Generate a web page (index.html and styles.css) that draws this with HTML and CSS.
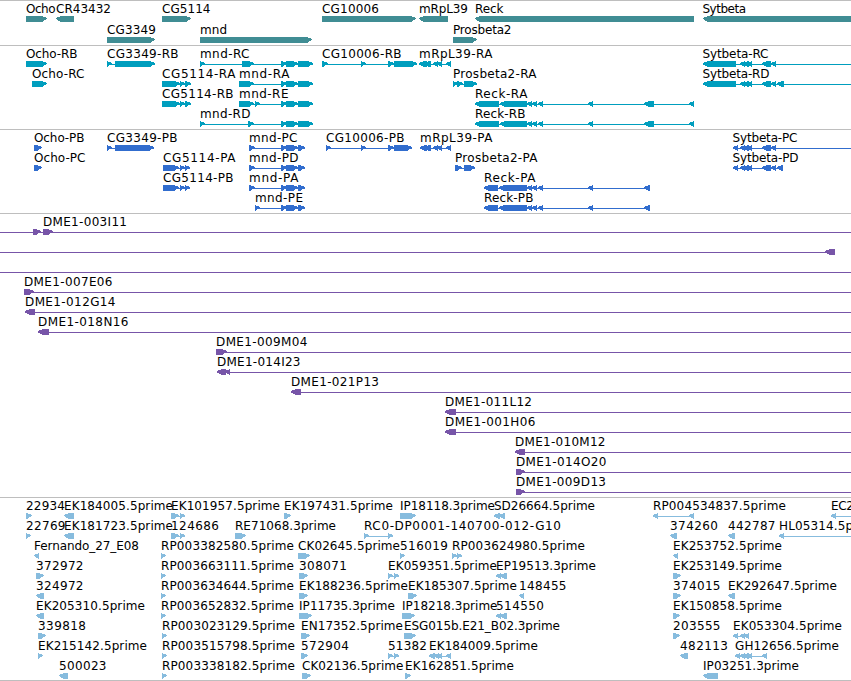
FILE: index.html
```html
<!DOCTYPE html>
<html lang="en">
<head>
    <meta charset="UTF-8">
    <meta name="viewport" content="width=device-width, initial-scale=1.0">
    <title>Genome Browser</title>
    <link rel="stylesheet" href="styles.css">
</head>
<body>
    <div class="browser">
        <section class="track genes" id="genes"></section>
        <section class="track transcripts" id="transcripts"></section>
        <section class="track cds" id="cds"></section>
        <section class="track bacs" id="bacs"></section>
        <section class="track ests" id="ests"></section>
    </div>
    <script src="tracks.js"></script>
</body>
</html>
```
FILE: styles.css
```css
body {
    margin: 0;
    background: #fff;
    font-family: 'DejaVu Sans', sans-serif;
    font-size: 12px;
}
.browser {
    width: 851px;
    overflow: hidden;
    border-bottom: 1px solid #bebebe;
}
.track {
    display: flex;
    flex-direction: column;
    border-top: 1px solid #bebebe;
    padding-bottom: 3px;
}
.genes, .ests {
    padding-bottom: 2px;
}
.lane {
    display: block;
    width: 851px;
    height: 20px;
    flex: none;
    overflow: visible;
}
.genes .lane {
    height: 21px;
}
.lane text {
    fill: #000;
}
.lane path {
    shape-rendering: crispEdges;
}
.genes {
    color: #408d94;
}
.transcripts {
    color: #009ebe;
}
.cds {
    color: #316dce;
}
.bacs {
    color: #7755a8;
}
.ests {
    color: #87bcde;
}
```
FILE: tracks.js
```js
// feature: [label, start, label end, strand, exons, line start, line end]
const mndEnd = [[281, 287], [286, 298], [298, 313]];
const mndCds = [[281, 287], [286, 298], [298, 305]];
const mrp = [[419, 427], [424, 431], [433, 438], [437, 442], [446, 451]];
const mrpCds = [[420, 427], [424, 431], [433, 438], [437, 442], [446, 451]];
const reckMid = [[527, 532], [532, 537], [538, 543], [588, 593]];
const reckRna = [[475, 499], [500, 527], ...reckMid, [644, 654], [689, 694]];
const reckCds = [[484, 498], [499, 527], ...reckMid, [644, 650]];
const syt = [[740, 745], [743, 749], [747, 752], [762, 771], [771, 776]];

const tracks = {
    genes: [
        [
            ["Ocho", 26, 55.5, 1, [[26, 47]]],
            ["CR43432", 56, 111, -1, [[56, 74]]],
            ["CG5114", 162, 210.5, 1, [[162, 191]]],
            ["CG10006", 322, 379, 1, [[322, 416]]],
            ["mRpL39", 419, 468, -1, [[419, 448]]],
            ["Reck", 475, 503.5, -1, [[475, 694]]],
            ["Sytbeta", 702.5, 746, -1, [[703, 860]]]
        ],
        [
            ["CG3349", 107, 156, 1, [[107, 155]]],
            ["mnd", 200, 227, 1, [[200, 312]]],
            ["Prosbeta2", 453, 511.5, 1, [[453, 477]]]
        ]
    ],
    transcripts: [
        [
            ["Ocho-RB", 26, 77.5, 1, [[26, 47]]],
            ["CG3349-RB", 107, 178.5, 1, [[107, 112], [115, 155]]],
            ["mnd-RC", 200, 249.5, 1, [[200, 205], [242, 254], ...mndEnd]],
            ["CG10006-RB", 322, 401.5, 1, [[322, 328], [361, 366], [388, 394], [394, 417]]],
            ["mRpL39-RA", 419, 492.5, -1, mrp],
            ["Sytbeta-RC", 702.5, 768.5, -1, [[703, 736], ...syt], 703, 851]
        ],
        [
            ["Ocho-RC", 32, 84.5, 1, [[32, 47]]],
            ["CG5114-RA", 162, 235.5, 1, [[162, 180], [180, 185], [185, 191]]],
            ["mnd-RA", 239, 289.5, 1, [[239, 254], ...mndEnd]],
            ["Prosbeta2-RA", 453, 536.5, 1, [[453, 458], [457, 463], [464, 477]]],
            ["Sytbeta-RD", 702.5, 769.5, -1, [[703, 736], ...syt, [777, 784]], 703, 851]
        ],
        [
            ["CG5114-RB", 162, 233.5, 1, [[162, 180], [180, 185], [185, 191]]],
            ["mnd-RE", 239, 288.5, 1, [[239, 254], [255, 260], ...mndEnd]],
            ["Reck-RA", 475, 527.5, -1, reckRna]
        ],
        [
            ["mnd-RD", 200, 250.5, 1, [[200, 205], [248, 254], ...mndEnd]],
            ["Reck-RB", 475, 525.5, -1, reckRna]
        ]
    ],
    cds: [
        [
            ["Ocho-PB", 34, 84.5, 1, [[34, 42]]],
            ["CG3349-PB", 107, 177.5, 1, [[107, 112], [115, 154]]],
            ["mnd-PC", 249, 297.5, 1, [[249, 255], ...mndCds]],
            ["CG10006-PB", 326, 404.5, 1, [[326, 331], [361, 366], [388, 394], [394, 412]]],
            ["mRpL39-PA", 420, 492.5, -1, mrpCds],
            ["Sytbeta-PC", 732.5, 797.5, -1, [[733, 738], ...syt], 733, 851]
        ],
        [
            ["Ocho-PC", 34, 85.5, 1, [[34, 42]]],
            ["CG5114-PA", 163, 235.5, 1, [[163, 179], [180, 185], [185, 190]]],
            ["mnd-PD", 249, 298.5, 1, [[249, 255], ...mndCds]],
            ["Prosbeta2-PA", 455, 537.5, 1, [[455, 462], [464, 475]]],
            ["Sytbeta-PD", 732.5, 798.5, -1, [[733, 738], ...syt, [777, 783]]]
        ],
        [
            ["CG5114-PB", 163, 233.5, 1, [[163, 179], [180, 185], [185, 190]]],
            ["mnd-PA", 249, 298.5, 1, [[249, 255], ...mndCds]],
            ["Reck-PA", 484, 535.5, -1, reckCds]
        ],
        [
            ["mnd-PE", 255, 303, 1, [[255, 260], ...mndCds]],
            ["Reck-PB", 484, 533.5, -1, reckCds]
        ]
    ],
    bacs: [
        [["DME1-003I11", 43, 127, 1, [[33, 41], [43, 53]], 0, 851]],
        [["", 0, 0, -1, [[825, 835]], 0, 835]],
        [["", 0, 0, 1, [], 0, 851]],
        [["DME1-007E06", 24, 112.5, 1, [[24, 34]], 24, 851]],
        [["DME1-012G14", 25, 115.5, -1, [[25, 35]], 25, 851]],
        [["DME1-018N16", 38, 128.5, -1, [[38, 49]], 38, 851]],
        [["DME1-009M04", 216, 307.5, 1, [[216, 227]], 216, 851]],
        [["DME1-014I23", 217, 300.5, -1, [[217, 226], [225, 230]], 217, 851]],
        [["DME1-021P13", 291, 379, -1, [[291, 301]], 291, 851]],
        [["DME1-011L12", 445, 532, -1, [[445, 456]], 445, 851]],
        [["DME1-001H06", 445, 535.5, -1, [[445, 456]], 445, 851]],
        [["DME1-010M12", 515, 605.5, -1, [[515, 525]], 515, 851]],
        [["DME1-014O20", 516, 606.5, 1, [[516, 525]], 516, 851]],
        [["DME1-009D13", 516, 606, 1, [[516, 525]], 516, 851]]
    ],
    ests: [
        [
            ["22934", 26, 65, 1, [[26, 32]]],
            ["EK184005.5prime", 64, 173, -1, [[64, 74]]],
            ["EK101957.5prime", 171, 280, 1, [[171, 179], [180, 185]]],
            ["EK197431.5prime", 284, 393, 1, [[284, 291]]],
            ["IP18118.3prime", 400, 495, 1, [[400, 416]]],
            ["SD26664.5prime", 494, 595, -1, [[494, 500], [499, 505]]],
            ["RP004534837.5prime", 653, 786, -1, [[653, 658], [689, 694]]],
            ["EC2", 831, 854, -1, [[831, 836]], 831, 851]
        ],
        [
            ["22769", 26, 65.5, 1, [[26, 31]]],
            ["EK181723.5prime", 64, 173, -1, [[64, 74]]],
            ["124686", 171, 219, 1, [[171, 179], [180, 185]]],
            ["RE71068.3prime", 235, 336, 1, [[235, 246]]],
            ["RC0-DP0001-140700-012-G10", 364, 561, 1, [[364, 369], [388, 393]]],
            ["374260", 670, 718, -1, [[670, 677]]],
            ["442787", 728, 775.5, -1, [[728, 735]]],
            ["HL05314.5prime", 779, 881, -1, [[779, 784]], 779, 851]
        ],
        [
            ["Fernando_27_E08", 34, 139, -1, [[34, 39]]],
            ["RP003382580.5prime", 161, 294, 1, [[161, 166]]],
            ["CK02645.5prime", 298, 400, 1, [[298, 310]]],
            ["516019", 400, 448, 1, [[400, 405]]],
            ["RP003624980.5prime", 452, 585, 1, [[452, 457], [457, 462]]],
            ["EK253752.5prime", 673, 782, -1, [[673, 678]]]
        ],
        [
            ["372972", 36, 83.5, 1, [[36, 44]]],
            ["RP003663111.5prime", 161, 294, 1, [[161, 166]]],
            ["308071", 299, 347, 1, [[299, 308]]],
            ["EK059351.5prime", 388, 497, 1, [[388, 393], [394, 399]]],
            ["EP19513.3prime", 496, 596, -1, [[496, 501], [500, 507]]],
            ["EK253149.5prime", 673, 782, 1, [[673, 681]]]
        ],
        [
            ["324972", 36, 83.5, -1, [[36, 44]]],
            ["RP003634644.5prime", 161, 294, 1, [[161, 166]]],
            ["EK188236.5prime", 299, 408, 1, [[299, 308]]],
            ["EK185307.5prime", 408, 517, 1, [[408, 417]]],
            ["148455", 519, 566.5, -1, [[519, 524]]],
            ["374015", 673, 720.5, 1, [[673, 681]]],
            ["EK292647.5prime", 728, 837, -1, [[728, 735]]]
        ],
        [
            ["EK205310.5prime", 36, 145, -1, [[36, 44]]],
            ["RP003652832.5prime", 161, 294, 1, [[161, 166]]],
            ["IP11735.3prime", 299, 395, 1, [[299, 312]]],
            ["IP18218.3prime", 402, 497.5, 1, [[402, 415]]],
            ["514550", 496, 544, -1, [[496, 501], [500, 507]]],
            ["EK150858.5prime", 673, 782, 1, [[673, 680]]]
        ],
        [
            ["339818", 38, 86, 1, [[38, 46]]],
            ["RP003023129.5prime", 162, 295, 1, [[162, 167]]],
            ["EN17352.5prime", 301, 403, 1, [[301, 310]]],
            ["ESG015b.E21_B02.3prime", 404, 560, 1, [[404, 416]]],
            ["203555", 673, 720.5, 1, [[673, 680]]],
            ["EK053304.5prime", 733, 842, -1, [[733, 738], [740, 745], [744, 749]]]
        ],
        [
            ["EK215142.5prime", 38, 147, 1, [[38, 43]]],
            ["RP003515798.5prime", 162, 295, 1, [[162, 167]]],
            ["572904", 301, 349, 1, [[301, 308]]],
            ["51382", 388, 427, 1, [[388, 393], [394, 399]]],
            ["EK184009.5prime", 429, 538, -1, [[429, 435], [434, 439], [437, 442], [446, 451]]],
            ["482113", 680, 728, -1, [[680, 688]]],
            ["GH12656.5prime", 735, 839, -1, [[735, 740], [740, 745], [743, 749], [747, 752], [762, 767]]]
        ],
        [
            ["500023", 59, 106.5, -1, [[59, 68]]],
            ["RP003338182.5prime", 162, 295, 1, [[162, 167]]],
            ["CK02136.5prime", 302, 403.5, 1, [[302, 311]]],
            ["EK162851.5prime", 405, 514, 1, [[405, 411]]],
            ["IP03251.3prime", 703, 799, -1, [[703, 718]]]
        ]
    ]
};

// exon with a 5px head pointing along the strand
function exon(x1, x2, strand) {
    const head = 5;
    if (strand > 0) {
        return `M${x1} 15H${x2 - head}L${x2} 17V18L${x2 - head} 21H${x1}Z`;
    }
    return `M${x2} 15H${x1 + head}L${x1} 17V18L${x1 + head} 21H${x2}Z`;
}

function feature([label, x, labelEnd, strand, exons, from, to]) {
    if (from === undefined) {
        from = exons[0][0];
        to = exons[exons.length - 1][1];
    }
    // single exons have no intron line
    let out = "";
    if (exons.length !== 1 || to - from > exons[0][1] - exons[0][0]) {
        out += `<path fill="currentColor" d="M${from} 18H${to}V19H${from}Z"/>`;
    }
    for (const [a, b] of exons) {
        out += `<path fill="currentColor" d="${exon(a, b, strand)}"/>`;
    }
    if (label) {
        out += `<text x="${x}" y="12" textLength="${labelEnd - x}">${label}</text>`;
    }
    return out;
}

for (const id in tracks) {
    document.getElementById(id).innerHTML = tracks[id]
        .map(lane => `<svg class="lane">${lane.map(feature).join("")}</svg>`)
        .join("");
}
```
